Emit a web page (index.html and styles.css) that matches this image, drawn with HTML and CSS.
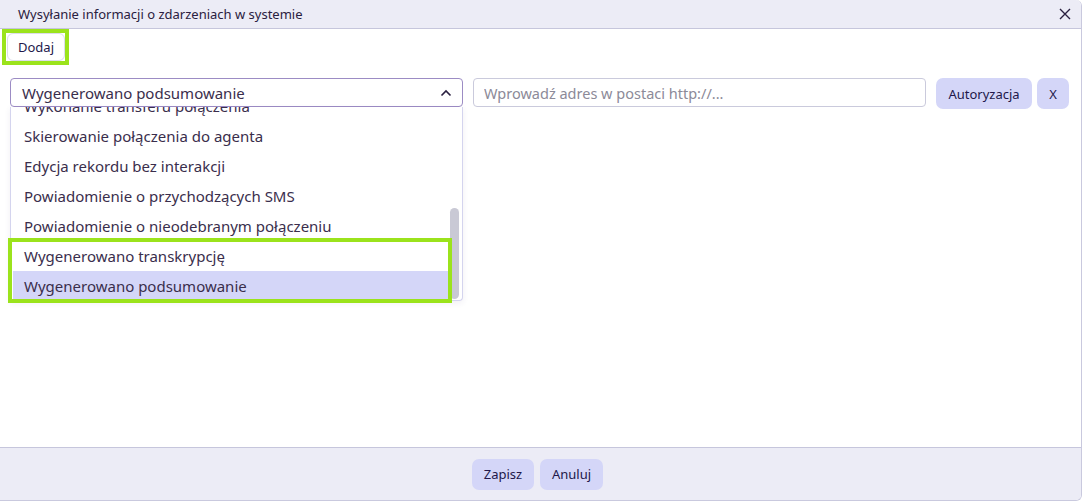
FILE: index.html
```html
<!DOCTYPE html>
<html lang="pl">
<head>
<meta charset="utf-8">
<link rel="stylesheet" href="styles.css">
</head>
<body>
<div class="dialog">
  <div class="header">
    <span class="title">Wysyłanie informacji o zdarzeniach w systemie</span>
    <svg class="close" width="12" height="12" viewBox="0 0 12 12"><path d="M1 1L11 11M11 1L1 11" stroke="#2a2040" stroke-width="1.4" fill="none"/></svg>
  </div>
  <div class="content">
    <div class="toolbar">
      <div class="add-mark"><button class="btn-add">Dodaj</button></div>
    </div>
    <div class="row">
      <div class="select-wrap">
        <div class="select">
          <span>Wygenerowano podsumowanie</span>
          <svg width="12" height="8" viewBox="0 0 12 8"><path d="M1.5 6.5L6 2L10.5 6.5" stroke="#2a2040" stroke-width="1.6" fill="none"/></svg>
        </div>
        <div class="dropdown">
          <div class="items">
            <div class="item">Wykonanie transferu połączenia</div>
            <div class="item">Skierowanie połączenia do agenta</div>
            <div class="item">Edycja rekordu bez interakcji</div>
            <div class="item">Powiadomienie o przychodzących SMS</div>
            <div class="item">Powiadomienie o nieodebranym połączeniu</div>
            <div class="item">Wygenerowano transkrypcję</div>
            <div class="item selected">Wygenerowano podsumowanie</div>
          </div>
          <div class="scrollbar"></div>
        </div>
        <div class="highlight"></div>
      </div>
      <input class="url" type="text" placeholder="Wprowadź adres w postaci http://...">
      <button class="btn btn-auth">Autoryzacja</button>
      <button class="btn btn-x">X</button>
    </div>
  </div>
  <div class="footer">
    <button class="btn btn-foot">Zapisz</button>
    <button class="btn btn-foot">Anuluj</button>
  </div>
</div>
</body>
</html>
```
FILE: styles.css
```css
* { box-sizing: border-box; }
body {
  margin: 0;
  font-family: "Noto Sans", "Liberation Sans", sans-serif;
  color: #2e2340;
  background: #fff;
}
.dialog {
  width: 1082px;
  height: 501px;
  border: 1px solid #c9c9de;
  border-left: none;
  border-top: none;
  border-radius: 0 6px 6px 0;
  display: flex;
  flex-direction: column;
  overflow: hidden;
}
.header {
  height: 29px;
  flex: none;
  background: #ececf6;
  border-bottom: 1px solid #c6c6dc;
  display: flex;
  align-items: center;
  justify-content: space-between;
  padding: 0 10px 0 18px;
}
.title {
  font-size: 13px;
  color: #2a2040;
}
.close { display: block; }
.content {
  flex: 1;
  padding: 0 12px 0 10px;
}
.toolbar {
  height: 49px;
}
.add-mark {
  display: inline-block;
  margin-left: -8px;
  border: 4px solid #9be31c;
  padding-left: 1px;
}
.btn-add {
  display: block;
  height: 28px;
  width: 58px;
  background: #fff;
  border: 1px solid #dcdcea;
  border-radius: 6px;
  font-family: inherit;
  font-size: 13px;
  color: #22184a;
  padding: 0;
}
.row {
  display: flex;
  align-items: flex-start;
  gap: 10px;
}
.select-wrap {
  position: relative;
  width: 453px;
}
.select {
  height: 29px;
  border: 1px solid #9c8cc4;
  border-radius: 4px;
  display: flex;
  align-items: center;
  justify-content: space-between;
  padding: 0 10px 0 11px;
  font-size: 15px;
  color: #3a2e4c;
}
.select svg { display: block; }
.dropdown {
  position: absolute;
  left: 0;
  top: 29px;
  width: 453px;
  height: 194px;
  border: 1px solid #d4d4ee;
  border-top: none;
  border-radius: 0 0 4px 4px;
  background: #fff;
  overflow: hidden;
  box-shadow: 0 2px 6px rgba(60, 50, 120, 0.08);
}
.items {
  margin-top: -16px;
  padding-left: 2px;
  width: 437px;
}
.item {
  height: 30px;
  display: flex;
  align-items: center;
  padding-left: 11px;
  font-size: 15px;
  color: #3a2e4c;
}
.item.selected { background: #d4d6f8; }
.highlight {
  position: absolute;
  left: -2px;
  top: 160px;
  width: 444px;
  height: 65px;
  border: 4px solid #9be31c;
  pointer-events: none;
}
.scrollbar {
  position: absolute;
  right: 3px;
  top: 101px;
  width: 9px;
  height: 91px;
  border-radius: 5px;
  background: #c9c9d5;
}
.url {
  width: 453px;
  height: 29px;
  border: 1px solid #cacadc;
  border-radius: 4px;
  padding: 0 10px;
  font-family: inherit;
  font-size: 14.5px;
  color: #3a2e4c;
}
.url::placeholder { color: #8c8a98; }
.btn {
  height: 31px;
  border: none;
  border-radius: 7px;
  background: #d4d6f8;
  font-family: inherit;
  font-size: 13px;
  color: #22184a;
  padding: 0;
}
.btn-auth { width: 96px; }
.btn-x { width: 32px; margin-left: -5px; }
.footer {
  height: 53px;
  flex: none;
  background: #ececf6;
  border-top: 1px solid #c6c6dc;
  display: flex;
  justify-content: center;
  align-items: center;
  gap: 6px;
  padding-right: 6px;
}
.btn-foot { width: 62px; }
.btn-foot + .btn-foot { width: 63px; }
```
